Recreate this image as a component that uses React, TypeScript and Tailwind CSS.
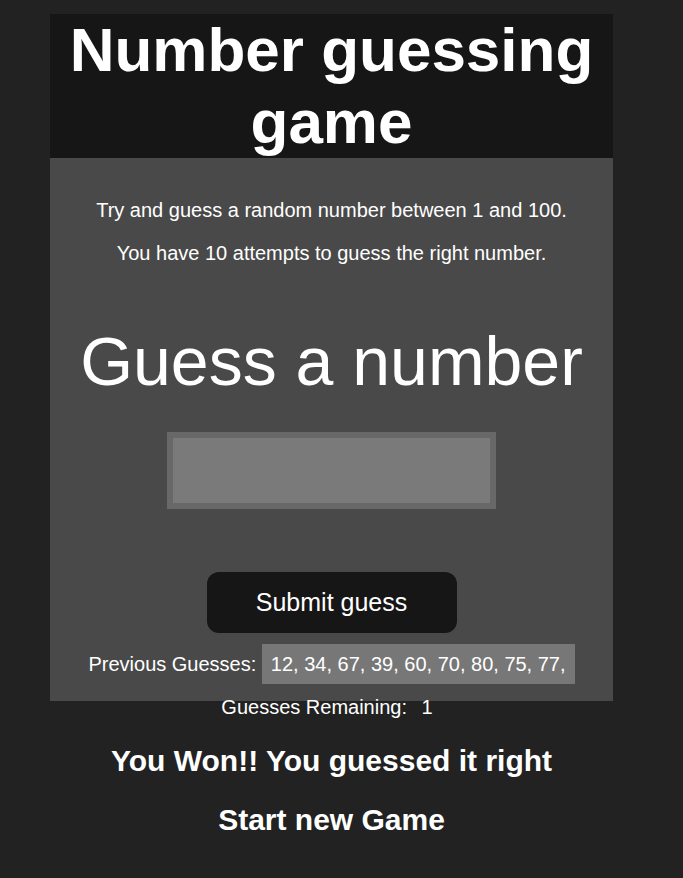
import React from 'react';

const guesses = [12, 34, 67, 39, 60, 70, 80, 75, 77];

const App = () => {
  return (
    <div className="min-h-screen bg-[#222222] pt-[14px] text-white font-['Liberation_Sans',Arial,sans-serif]">
      <div className="ml-[50px] w-[563px]">
        {/* Header */}
        <div className="bg-[#161616]">
          <h1 className="text-center text-[62px] font-bold leading-[72px]">Number guessing game</h1>
        </div>

        {/* Game body - fixed height, the last lines spill below it */}
        <div className="flex h-[543px] flex-col items-center bg-[#494949] text-center *:shrink-0">
          <p className="mt-[41px] text-[20px] leading-[23px]">Try and guess a random number between 1 and 100.</p>
          <p className="mt-[20px] text-[20px] leading-[23px]">You have 10 attempts to guess the right number.</p>

          <h2 className="mt-[57px] text-[68px] leading-[78px]">Guess a number</h2>

          <input
            type="text"
            className="mt-[32px] h-[77px] w-[329px] border-[6px] border-[#686868] bg-[#7a7a7a] outline-none"
          />

          <button className="mt-[63px] h-[61px] w-[250px] rounded-[12px] bg-[#161616] text-[25px] text-white">
            Submit guess
          </button>

          <p className="mt-[20px] whitespace-nowrap text-[20px] leading-[23px]">
            Previous Guesses:{' '}
            <span className="bg-[#777777] px-[9px] py-[9px]">{guesses.map((g) => `${g},`).join(' ')}</span>
          </p>

          <p className="mt-[20px] whitespace-nowrap text-[20px] leading-[23px]">
            Guesses Remaining: <span className="px-[9px] py-[9px]">1</span>
          </p>

          {/* Result */}
          <h2 className="mt-[25px] text-[30px] font-bold leading-[34px]">You Won!! You guessed it right</h2>
          <h2 className="mt-[25px] text-[30px] font-bold leading-[34px]">Start new Game</h2>
        </div>
      </div>
    </div>
  );
};

export default App;
